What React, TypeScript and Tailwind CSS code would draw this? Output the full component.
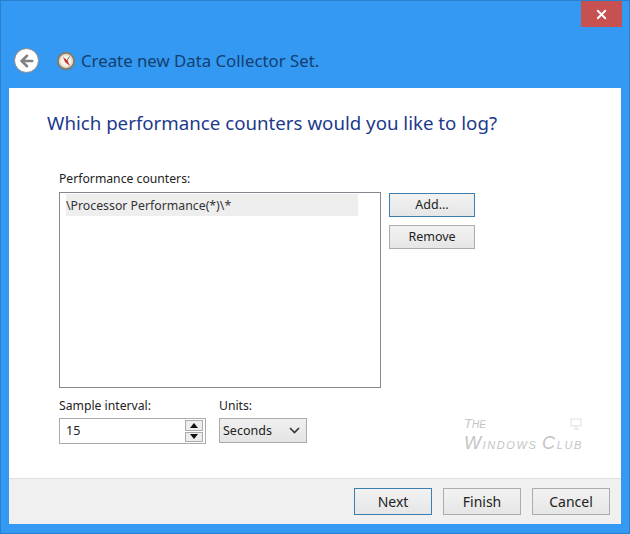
import { ArrowLeft, X } from 'lucide-react'

function Btn({ label, focused, className }: { label: string; focused?: boolean; className: string }) {
  return (
    <button
      className={`flex items-center justify-center border bg-gradient-to-b from-[#f2f2f2] to-[#e6e6e6] text-[#222] ${
        focused ? 'border-[#3c7fb1] ' : 'border-[#acacac] '
      }${className}`}
    >
      {label}
    </button>
  )
}

export default function App() {
  return (
    <div className="flex h-[534px] w-[630px] flex-col overflow-hidden border border-[#2a80cc] bg-[#3399f3] font-['Noto_Sans',sans-serif] text-[#222]">
      {/* title bar */}
      <div className="flex h-[87px] flex-col pl-[13px] pr-[7px]">
        <div className="flex justify-end">
          <button className="flex h-[26px] w-[41px] items-center justify-center bg-[#c75050] text-white">
            <X size={15} strokeWidth={3} />
          </button>
        </div>
        <div className="mt-[21px] flex items-center">
          <div className="flex h-[25px] w-[25px] items-center justify-center rounded-full border border-[#888] bg-white">
            <ArrowLeft size={18} strokeWidth={3.4} className="text-[#808080]" />
          </div>
          <svg width="20" height="20" viewBox="0 0 20 20" className="ml-[17px]">
            <circle cx="10" cy="10" r="8.2" fill="#e3d8c6" stroke="#7f7d72" strokeWidth="2" />
            <circle cx="10" cy="10" r="5.4" fill="#f7f3ec" />
            <path d="M7 6 L11.5 9.5 L14 15 L9 11 Z" fill="#c8332b" />
            <path d="M13.5 5.5 L11 9.5" stroke="#6b6b6b" strokeWidth="1" />
          </svg>
          <span className="ml-[5px] text-[16.8px] leading-6 text-[#14406f]">Create new Data Collector Set.</span>
        </div>
      </div>

      {/* wizard body */}
      <div className="mx-[8px] flex h-[436px] flex-col bg-white">
        <div className="relative flex-1 pl-[38px]">
          <h1 className="mt-[21px] text-[18.7px] leading-[28px] font-normal text-[#1c3a8c]">
            Which performance counters would you like to log?
          </h1>
          <div className="mt-[33px] pl-[12px]">
            <div className="text-[12.2px] leading-[18px]">Performance counters:</div>
            <div className="mt-[4px] flex items-start">
              <div className="h-[196px] w-[322px] border border-[#828790] px-[6px] py-[1px]">
                <div className="h-[22px] w-[292px] bg-[#eeeeee] text-[12.3px] leading-[23px] text-[#333]">
                  \Processor Performance(*)\*
                </div>
              </div>
              <div className="ml-[8px] flex flex-col gap-[8px] pt-[1px]">
                <Btn label="Add..." focused className="h-[24px] w-[86px] text-[12.5px]" />
                <Btn label="Remove" className="h-[24px] w-[86px] text-[12.5px]" />
              </div>
            </div>
            <div className="mt-[9px] flex">
              <div className="w-[160px]">
                <div className="text-[12.2px] leading-[18px]">Sample interval:</div>
                <div className="mt-[3px] flex h-[26px] w-[147px] items-center justify-between border border-[#ababab] pl-[6px] pr-[2px]">
                  <span className="text-[12.5px]">15</span>
                  <div className="flex h-[22px] w-[18px] flex-col gap-[1px]">
                    <div className="flex flex-1 items-center justify-center border border-[#acacac] bg-[#eee]">
                      <svg width="8" height="5" viewBox="0 0 8 5"><path d="M0 5 L4 0 L8 5 Z" fill="#111" /></svg>
                    </div>
                    <div className="flex flex-1 items-center justify-center border border-[#acacac] bg-[#eee]">
                      <svg width="8" height="5" viewBox="0 0 8 5"><path d="M0 0 L8 0 L4 5 Z" fill="#111" /></svg>
                    </div>
                  </div>
                </div>
              </div>
              <div>
                <div className="text-[12.2px] leading-[18px]">Units:</div>
                <div className="mt-[3px] flex h-[25px] w-[88px] items-center justify-between border border-[#acacac] bg-gradient-to-b from-[#f0f0f0] to-[#e4e4e4] pl-[3px] pr-[6px]">
                  <span className="pt-[1px] text-[12.5px]">Seconds</span>
                  <svg width="11" height="7" viewBox="0 0 11 7"><path d="M1 1 L5.5 5.5 L10 1" fill="none" stroke="#333" strokeWidth="1.6" /></svg>
                </div>
              </div>
            </div>
          </div>
          {/* watermark */}
          <div className="absolute left-[455px] top-[329px] font-['Liberation_Sans',sans-serif] text-[#c4c4c4] italic">
            <div className="text-[10px] leading-[14px]">
              <span className="text-[13px]">T</span>HE
            </div>
            <div className="mt-[2px] text-[11px] leading-[18px] tracking-[1.6px] whitespace-nowrap">
              <span className="text-[18px]">W</span>INDOWS <span className="text-[18px]">C</span>LUB
            </div>
            <svg width="14" height="14" viewBox="0 0 14 14" className="absolute left-[105px] top-0">
              <path d="M2 2 H12 V9 H2 Z M5 12 H10 M7 9 V12" fill="none" stroke="#dedede" strokeWidth="1" />
            </svg>
          </div>
        </div>

        {/* footer */}
        <div className="flex h-[46px] shrink-0 justify-end gap-[11px] border-t border-[#dfdfdf] bg-[#f0f0f0] pt-[9px] pr-[11px]">
          <Btn label="Next" focused className="h-[27px] w-[78px] text-[14px]" />
          <Btn label="Finish" className="h-[27px] w-[78px] text-[14px]" />
          <Btn label="Cancel" className="h-[27px] w-[78px] text-[14px]" />
        </div>
      </div>
    </div>
  )
}
